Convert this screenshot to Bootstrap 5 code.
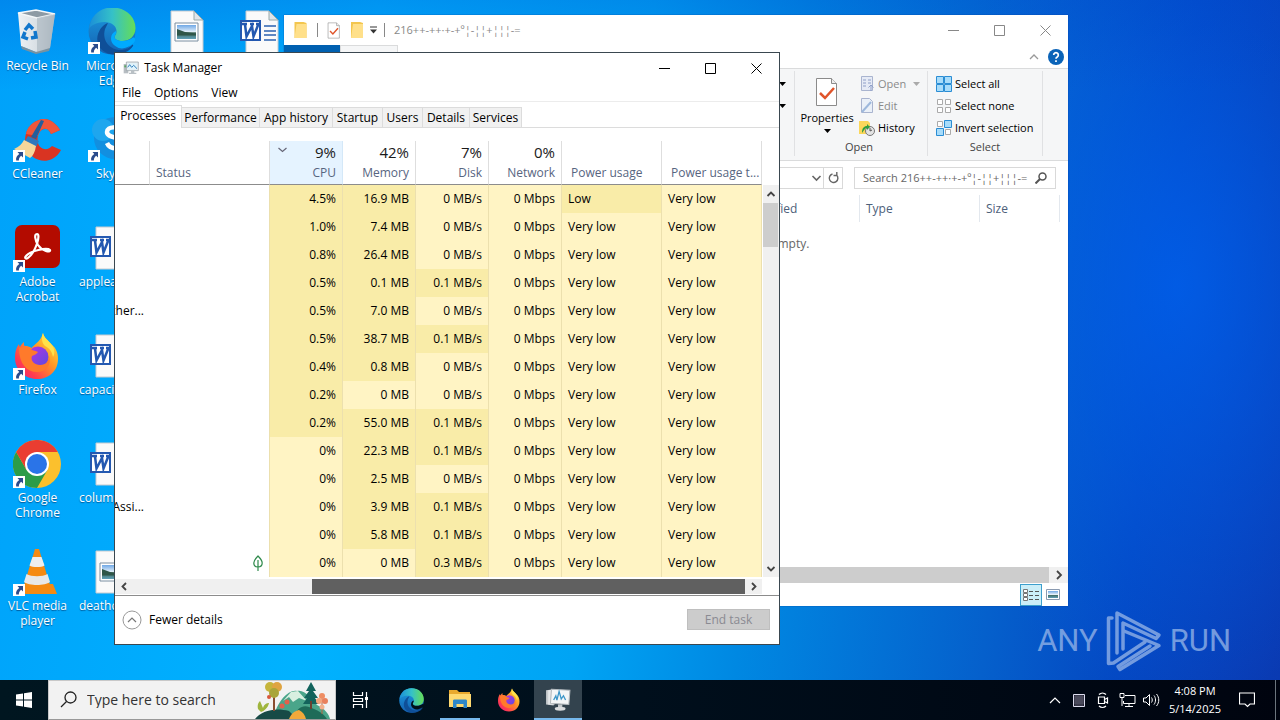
<!DOCTYPE html>
<html lang="en">
<head>
<meta charset="utf-8">
<meta name="viewport" content="width=device-width, initial-scale=1">
<title>Desktop</title>
<link href="https://cdn.jsdelivr.net/npm/bootstrap@5.3.0/dist/css/bootstrap.min.css" rel="stylesheet">
<style>
  body { font-family: "Open Sans", "Noto Sans", sans-serif; font-size: 12px; line-height: 16px; color: #000; }
  button, input { font: inherit; color: inherit; }
  button { background: none; border: 0; padding: 0; }
  a { color: inherit; text-decoration: none; }
  svg { display: block; flex: none; }
  .screen { background:
      linear-gradient(180deg, rgba(0,70,205,.28) 0, rgba(0,70,205,0) 90px),
      radial-gradient(ellipse 260px 420px at 92% 42%, rgba(0,98,240,.75), rgba(0,98,240,0)),
      linear-gradient(97deg, #00a2fa 0%, #00b2ff 28%, #00a4f4 48%, #0088e2 60%, #0560cc 78%, #0448c2 88%, #0a3ab2 100%); }

  /* desktop shortcuts */
  .shortcuts { display: grid; grid-auto-flow: column; grid-template-rows: repeat(6, 108px); grid-auto-columns: 75px; padding-top: 8px; width: max-content; position: relative; }
  .shortcut { color: #fff; text-align: center; line-height: 15px; overflow: hidden; text-shadow: 0 1px 1px rgba(0,40,90,.6); }
  .shortcut svg { margin: 0 auto 2px 13px; }
  .clipped { text-align: left; padding-left: 4px; white-space: nowrap; }
  .clipped svg { margin-left: 6px; }
  .topdoc svg { margin-left: 10px; }

  /* windows */
  .win { position: absolute; background: #fff; }
  .explorer { left: 284px; top: 15px; width: 784px; height: 591px; box-shadow: 0 0 1px #0a3a90; font-size: 11px; }
  .taskmgr { left: 114px; top: 52px; width: 666px; height: 593px; border: 1px solid #3a4750; }
  .capbtn { width: 46px; height: 30px; display: grid; place-items: center; }

  .ex-title { height: 30px; color: #888; }
  .ex-tabs { height: 23px; }
  .file-tab { width: 56px; background: #0060b0; color: #fff; }
  .ctx-tab { width: 58px; background: #f5f6f7; border: 1px solid #dadbdc; border-bottom: 0; }
  .ribbon { height: 93px; background: #f5f6f7; border-top: 1px solid #dadbdc; border-bottom: 1px solid #dadbdc; padding-right: 25px; }
  .rgroup { border-right: 1px solid #e0e1e3; margin: 2px 0 4px; padding-top: 2px; position: relative; }
  .rgroup button { display: flex; align-items: center; height: 22px; gap: 3px; white-space: nowrap; }
  .rgroup .props { flex-direction: column; height: auto; gap: 3px; width: 56px; }
  .rlabel { text-align: center; color: #444; }
  .off { color: #8a8a8a; }
  .field { border: 1px solid #d9d9d9; height: 22px; }
  .field input { border: 0; outline: 0; width: 100%; min-width: 0; padding: 0 0 0 8px; background: none; }
  .field input::placeholder { color: #666; opacity: 1; }
  .ex-head { height: 27px; color: #4c607a; font-size: 12px; line-height: 28px; }
  .ex-head span { border-right: 1px solid #e3e8ee; padding-left: 6px; }
  .ex-empty { color: #666; font-size: 12px; padding: 14px 0 0 154px; }
  .ex-scroll { height: 16px; background: #f0f0f0; }
  .ex-scroll span { background: #cdcdcd; }
  .ex-foot { height: 23px; }
  .view-on { width: 22px; height: 22px; background: #cbeef8; border: 1px solid #3c9fcd; display: grid; place-items: center; }

  .tm-title { height: 30px; padding-left: 8px; }
  .tm-menu { height: 19px; border-bottom: 1px solid #ececec; padding: 2px 0 0 7px; gap: 13px; }
  .tm-tabs { height: 26px; padding-top: 3px; border-bottom: 1px solid #dcdcdc; align-items: flex-end; }
  .tm-tabs button { height: 20px; line-height: 19px; background: #f1f1f1; border: 1px solid #dcdcdc; border-width: 1px 1px 0 0; text-align: center; }
  .tm-tabs .on { height: 23px; line-height: 20px; background: #fff; margin-bottom: -1px; padding-bottom: 3px; }
  .procs { table-layout: fixed; width: 647px; border-collapse: separate; border-spacing: 0; }
  .procs th { height: 44px; vertical-align: bottom; font-weight: 400; color: #57657f; padding: 0 6px 3px; line-height: 16px; border-right: 1px solid #dedede; border-bottom: 1px solid #8c8c8c; white-space: nowrap; overflow: hidden; }
  .procs th b { display: block; font-weight: 400; font-size: 15px; line-height: 20px; color: #1a1a1a; margin-bottom: 3px; }
  .procs th.pw { padding-left: 9px; }
  .procs th.sorted { background: #e5f3ff; position: relative; border-right-color: #d4e8f8; }
  .procs th.sorted svg { position: absolute; left: 8px; top: 6px; }
  .procs td { height: 28px; padding: 0 6px; white-space: nowrap; overflow: hidden; }
  .procs td.n { text-align: right; }
  .procs td.n, .procs td.p { background: #fff4c4; border-right: 1px solid #ece0ae; }
  .procs td.hot { background: #f9eca8; }
  .procs td.st { border-right: 1px solid #ece0ae; }
  .nm { display: flex; justify-content: flex-end; overflow: hidden; }
  .procs td.nmc { padding: 0 6px 0 0; }
  .vbar { width: 16px; margin-top: 44px; background: #f0f0f0; }
  .vbar .thumb { height: 44px; background: #cdcdcd; margin: 0 1px 0 0; }
  .hbar { height: 15px; width: 647px; background: #f0f0f0; margin: 2px 0 1px; }
  .hbar .thumb { background: #606060; }
  .tm-foot { border-top: 1px solid #8c8c8c; padding: 0 9px 1px 7px; }
  .endtask { width: 83px; height: 21px; background: #ccc; border: 1px solid #bfbfbf; color: #8a8a92; line-height: 19px; }

  /* watermark */
  .mark-run { position: absolute; right: 49px; bottom: 8px; color: #8fb0e6; font-family: "Roboto", sans-serif; font-size: 31px; line-height: 62px; opacity: .8; }

  /* taskbar */
  .taskbar { height: 40px; background: linear-gradient(90deg, #001620, #000f1c 50%, #00040f); color: #fff; position: relative; }
  .tb { height: 40px; display: grid; place-items: center; }
  .w48 { width: 48px; } .w24 { width: 24px; }
  .apps { gap: 1px; }
  .running { border-bottom: 2px solid #76b9ed; width: 40px; margin: 0 4px; }
  .active-app { background: #33434e; border-bottom: 2px solid #76b9ed; }
  .search { width: 288px; background: #f2f2f2; border: 1px solid #c8c8c8; border-bottom-color: #999; color: #333; }
  .search input { border: 0; outline: 0; background: none; width: 168px; font-size: 14px; padding: 0; }
  .search input::placeholder { color: #333; opacity: 1; }
  .clock { width: 64px; text-align: center; font-size: 11px; line-height: 18px; padding-top: 2px; }
</style>
</head>
<body>
<svg width="0" height="0" class="position-absolute" aria-hidden="true">
  <defs>
    <linearGradient id="eg1" x1="0" y1="0" x2="1" y2="0"><stop offset="0" stop-color="#1b8fd8"/><stop offset=".5" stop-color="#35c1c8"/><stop offset="1" stop-color="#66dd55"/></linearGradient>
    <linearGradient id="eg2" x1="0" y1="0" x2="0" y2="1"><stop offset="0" stop-color="#1b9de2"/><stop offset="1" stop-color="#1560b0"/></linearGradient>
    <linearGradient id="ff1" x1="1" y1="0" x2="0" y2="1"><stop offset="0" stop-color="#fff04a"/><stop offset=".4" stop-color="#ff9a24"/><stop offset=".75" stop-color="#ff3b50"/><stop offset="1" stop-color="#e0208a"/></linearGradient>
    <linearGradient id="ff2" x1="0" y1="0" x2="1" y2="1"><stop offset="0" stop-color="#b833e1"/><stop offset="1" stop-color="#5a4be0"/></linearGradient>
    <linearGradient id="sky" x1="0" y1="0" x2="0" y2="1"><stop offset="0" stop-color="#6fa8e6"/><stop offset=".5" stop-color="#e6f1fa"/><stop offset=".55" stop-color="#3e6658"/><stop offset="1" stop-color="#5fa0b8"/></linearGradient>
    <linearGradient id="bin" x1="0" y1="0" x2="1" y2="0"><stop offset="0" stop-color="#eef2f5"/><stop offset=".6" stop-color="#d5dce2"/><stop offset="1" stop-color="#a9b5be"/></linearGradient>
    <symbol id="arrow" viewBox="0 0 12 12"><path d="M0 0h12v12H0z" fill="#fff"/><path d="M4.500 2H10v5.500L8.200 5.800C6.500 7.300 5.800 8.500 5.900 10.500H3.200C2.600 7.600 4 5.400 6.300 3.900z" fill="#2b4b8c"/></symbol>
    <symbol id="edge" viewBox="0 0 48 48">
      <circle cx="24" cy="24" r="23.500" fill="url(#eg2)"/>
      <path d="M1 22C3 8 13 .5 24 .5 38 .5 47.500 10 47.500 21c0 9-7 13-13 13-5 0-8-2-8-4 0-1.500 2-2 2-6 0-5-5-9-12-9C8 15 2 19 1 22z" fill="url(#eg1)"/>
      <path d="M17 22c-4 14 8 22 17 21 5-.6 8-3 10-5 .8-.8 1.500 0 1 1-4 6-12 9-20 8.500C13 46.500 8 37 9.500 29 11 22 16 17 20 16z" fill="#0f4f98"/>
      <path d="M26.500 30c0 2 3 4 8 4 4 0 8-1.500 10.500-3.500 2 0 3 2 1 5-7 7-14 7-18 4-5-3-6-8-4-12 1-2 3-3 4-3.500 1 3-1.500 4-1.500 6z" fill="#00aafe"/>
    </symbol>
    <symbol id="edge-bar" viewBox="0 0 48 48">
      <circle cx="24" cy="24" r="23.500" fill="url(#eg2)"/>
      <path d="M1 22C3 8 13 .5 24 .5 38 .5 47.500 10 47.500 21c0 9-7 13-13 13-5 0-8-2-8-4 0-1.500 2-2 2-6 0-5-5-9-12-9C8 15 2 19 1 22z" fill="url(#eg1)"/>
      <path d="M17 22c-4 14 8 22 17 21 5-.6 8-3 10-5 .8-.8 1.500 0 1 1-4 6-12 9-20 8.500C13 46.500 8 37 9.500 29 11 22 16 17 20 16z" fill="#0f4f98"/>
      <path d="M26.500 30c0 2 3 4 8 4 4 0 8-1.500 10.500-3.500 2 0 3 2 1 5-7 7-14 7-18 4-5-3-6-8-4-12 1-2 3-3 4-3.500 1 3-1.500 4-1.500 6z" fill="#001019"/>
    </symbol>
    <symbol id="firefox" viewBox="0 0 48 48">
      <path d="M30 1c1 5 5 7 9 12 4 3 6 8 6 14 0 12-9 20-21 20S2 38 2 26c0-6 1-10 4-14 .2 1.500.5 2 1 3 1-2 2.500-4 4-5-.3 2 0 3 .5 4 3 0 5 .5 7 2C22 12 28 9 30 1z" fill="url(#ff1)"/>
      <circle cx="25" cy="25" r="10.500" fill="url(#ff2)"/>
      <path d="M6 16c5-2 10-2 13 2 2 1 5 1 6 2-1 2-4 3-6 4-2 5 3 9 8 9 6 0 9-4 9-9 3 9-3 16-12 16-10 0-18-8-18-24z" fill="#ff7a2b"/>
      <path d="M30 1c1 5 5 7 9 12 3 4 3 9 1 12-1-6-4-9-8-11-3-3-4-8-2-13z" fill="#ffe14a"/>
    </symbol>
    <symbol id="page" viewBox="0 0 34 44"><path d="M1 1h23l9 9v33H1z" fill="#fafafa" stroke="#c4cad0"/><path d="M24 1v9h9z" fill="#dfe5ea" stroke="#9aa"/></symbol>
    <symbol id="imgfile" viewBox="0 0 48 48"><use href="#page" x="10" y="2" width="34" height="44"/><path d="M15 15h23v18H15z" fill="#fff" stroke="#7a8ea0"/><path d="M17 17h19v14H17z" fill="url(#sky)"/><path d="M17 21l8 3 11 1.500v2H17z" fill="#2f5648"/></symbol>
    <symbol id="wordfile" viewBox="0 0 48 48"><use href="#page" x="10" y="2" width="34" height="44"/><path d="M29 18h12M29 23h12M29 27h12M29 32h12" stroke="#2b62b0" stroke-width="1.500"/><path d="M5 12h21v21H5z" fill="#2358b0"/><path d="M7 14h17v17H7z" fill="#fff"/><path d="M7 16h5M15 16h4M21 16h4M10 16.500l1.500 12L17 18l1.500 10.500L23.500 16" stroke="#2358b0" stroke-width="2.500" fill="none"/></symbol>
    <symbol id="tmicon" viewBox="0 0 24 24"><path d="M1 6h7v14H1z" fill="#b7bdc2"/><path d="M2 8h4v3H2z" fill="#55a860"/><path d="M5 3h18v13H5z" fill="#e8edf0" stroke="#8d979e"/><path d="M7 5h14v9H7z" fill="#dff3fb"/><path d="M7 11l3-4 3 4 3-3 5 5" stroke="#2b7ab8" stroke-width="1.400" fill="none"/><path d="M12 16h5v3h3v2H9v-2h3z" fill="#b9c0c5"/></symbol>
    <symbol id="tmbar" viewBox="0 0 24 24"><path d="M1 4l7-1v15l-7-1z" fill="#c9cdd0"/><path d="M3 4l6-1v14H3z" fill="#e6e8ea"/><path d="M6 3l17 1-1 13-17-1z" fill="#f4f6f7" stroke="#b4babe"/><path d="M8 13l2-4 1 4 2-8 2 7 2-3 2 4" stroke="#3b95c8" stroke-width="1.200" fill="none"/><path d="M12 17h4v3h-4z" fill="#c4c9cc"/><ellipse cx="14" cy="21" rx="5" ry="1.800" fill="#d9dcde"/></symbol>
    <symbol id="folder" viewBox="0 0 16 18"><path d="M2 1h9l3 1v15H2z" fill="#f3c64e"/><path d="M4 3h10v14H2z" fill="#ffe08a"/></symbol>
    <symbol id="check" viewBox="0 0 24 30"><path d="M1.500 1.500h15l5 5v22h-20z" fill="#fff" stroke="#8b8b8b"/><path d="M16.500 1.500v5h5" fill="#eee" stroke="#8b8b8b"/><path d="M5 16l5 5 9-10" stroke="#e0542a" stroke-width="2.500" fill="none"/></symbol>
  </defs>
</svg>

<div class="vh-100 d-flex flex-column overflow-hidden">
<main class="screen flex-grow-1 position-relative overflow-hidden">
  <nav class="shortcuts" aria-label="Desktop">
    <a class="shortcut" href="#"><svg width="48" height="48" viewBox="0 0 48 48"><path d="M5 5l18-3 19 4-5 34-14 4-15-6z" fill="url(#bin)"/><path d="M5 5l18-3 19 4-18 4z" fill="#8d9aa4" stroke="#f4f7f9" stroke-width="1.500"/><path d="M24 10l18-4-5 34-13 4z" fill="#aeb9c2" opacity=".7"/><path d="M8 38l15 6 14-4-1 3-13 3-14-5z" fill="#c98d68" opacity=".6"/><g fill="none" stroke="#1277cc" stroke-width="3.500"><path d="M12 22l4-5 4 4"/><path d="M22 23l1 6-5 1"/><path d="M15 31l-5-2 2-5"/></g></svg>Recycle Bin</a>
    <a class="shortcut" href="#"><svg width="48" height="48" viewBox="0 0 48 48"><path d="M47 14C42 6 34 1 26 4 14 8 10 20 13 32c4 10 16 16 26 11 4-2 7-5 9-9l-9-4c-4 5-12 4-14-3-2-9 3-15 8-14 2 0 4 2 5 5z" fill="#d93422"/><path d="M47 14C42 6 34 1 26 4c-8 3-12 8-13 14l12 2c2-6 5-8 8-7 2 0 4 2 5 5z" fill="#f0563a"/><path d="M28 4l3 1-8 18-5-2z" fill="#245e9c"/><path d="M15 20l11 5-3 6-11-6z" fill="#2f78bd"/><path d="M11 24l12 6c-1 6-3 10-6 12L1 33c5-2 8-5 10-9z" fill="#f6d79a"/><use href="#arrow" y="34" width="12" height="12"/></svg>CCleaner</a>
    <a class="shortcut" href="#"><svg width="48" height="48" viewBox="0 0 48 48"><rect x="2" y="1" width="45" height="43" rx="7" fill="#b30b00"/><path d="M13 32c4-5 21-9 24-6 1 3-8 1-12-5-3-5-4-11-1-11 4 0-1 17-8 23-3 3-5 1-3-1z" fill="none" stroke="#fff" stroke-width="2.200"/><use href="#arrow" y="36" width="12" height="12"/></svg>Adobe<br>Acrobat</a>
    <a class="shortcut" href="#"><svg width="48" height="48" viewBox="0 0 48 48"><use href="#firefox" width="48" height="48"/><use href="#arrow" y="36" width="12" height="12"/></svg>Firefox</a>
    <a class="shortcut" href="#"><svg width="48" height="48" viewBox="0 0 48 48"><circle cx="24" cy="24" r="24" fill="#fbc02d"/><path d="M3.200 12A24 24 0 0 0 24 48l10.400-18-10.400 6-10.400-6z" fill="#2c9c48"/><path d="M3.200 12A24 24 0 0 1 44.800 12H24L13.600 30z" fill="#ea3d31"/><circle cx="24" cy="24" r="12" fill="#fff"/><circle cx="24" cy="24" r="10" fill="#2a74e8"/><use href="#arrow" y="36" width="12" height="12"/></svg>Google<br>Chrome</a>
    <a class="shortcut" href="#"><svg width="48" height="48" viewBox="0 0 48 48"><path d="M10 36h30l4 10H6z" fill="#f58a12"/><path d="M22 1h4l11 36c-6 5-20 5-26 0z" fill="#f58a12"/><path d="M19.500 9h9l3 8.500c-3 2-12 2-15 0z" fill="#eee"/><path d="M13.500 26c5 3 16 3 21 0l2.500 8c-5 4-21 4-26 0z" fill="#e8e8e8"/><use href="#arrow" y="36" width="12" height="12"/></svg>VLC media<br>player</a>

    <a class="shortcut" href="#"><svg width="48" height="48" viewBox="0 0 48 48"><use href="#edge" y="-1" width="48" height="48"/><use href="#arrow" y="34" width="12" height="12"/></svg>Microsoft<br>Edge</a>
    <a class="shortcut" href="#"><svg width="48" height="48" viewBox="0 0 48 48"><circle cx="27" cy="22" r="21" fill="#128fe0"/><circle cx="15" cy="14" r="11" fill="#1ea6ee"/><path d="M34 15c-3-5-15-5-15 1 0 7 16 4 16 11 0 7-13 7-16 0" fill="none" stroke="#fff" stroke-width="4.500"/><use href="#arrow" y="34" width="12" height="12"/></svg>Skype</a>
    <a class="shortcut clipped" href="#"><svg width="48" height="48"><use href="#wordfile"/></svg>applea</a>
    <a class="shortcut clipped" href="#"><svg width="48" height="48"><use href="#wordfile"/></svg>capacit</a>
    <a class="shortcut clipped" href="#"><svg width="48" height="48"><use href="#wordfile"/></svg>columl</a>
    <a class="shortcut clipped" href="#"><svg width="48" height="48"><use href="#imgfile"/></svg>deathc</a>
    <a class="shortcut topdoc" href="#" aria-label="Picture" style="grid-column:3;grid-row:1"><svg width="48" height="48"><use href="#imgfile"/></svg></a>
    <a class="shortcut topdoc" href="#" aria-label="Document" style="grid-column:4;grid-row:1"><svg width="48" height="48"><use href="#wordfile"/></svg></a>
  </nav>

  <div class="mark-run d-flex align-items-center"><span>ANY</span>
    <svg width="56" height="62" viewBox="0 0 56 62" class="mx-2" fill="none" stroke="#8fb0e6" stroke-width="3.500" stroke-linejoin="round" stroke-linecap="round"><path d="M11 43V3l42 22-3 3.500L17 13v26"/><path d="M6 8H2.500v45.500l5-.5L39 32"/><path d="M18 21l35 14.500L14 59.500l-2-3L44 36"/></svg>
    <span>RUN</span></div>

  <section class="win explorer d-flex flex-column overflow-hidden" aria-label="File Explorer">
    <div class="ex-title d-flex align-items-center">
      <svg class="ms-2" width="17" height="18"><use href="#folder"/></svg>
      <svg class="ms-2" width="2" height="14"><path d="M.5 0v14" stroke="#888"/></svg>
      <svg class="ms-2" width="14" height="17"><use href="#check"/></svg>
      <svg class="ms-2" width="16" height="18"><use href="#folder"/></svg>
      <svg class="ms-1" width="9" height="8"><path d="M1 1h7" stroke="#333"/><path d="M1 3.500h7l-3.500 4z" fill="#333"/></svg>
      <svg width="8" height="14"><path d="M6.500 0v14" stroke="#888"/></svg>
      <span class="ms-2 flex-grow-1">216++-++·+-+º¦-¦¦+¦¦¦-=</span>
      <button class="capbtn" aria-label="Minimize"><svg width="11" height="11"><path d="M0 5.500h11" stroke="#888"/></svg></button>
      <button class="capbtn" aria-label="Maximize"><svg width="11" height="11"><path d="M.5.5h10v10H.5z" fill="none" stroke="#888"/></svg></button>
      <button class="capbtn" aria-label="Close"><svg width="11" height="11"><path d="M.5.5l10 10M10.500.5l-10 10" stroke="#888"/></svg></button>
    </div>
    <div class="ex-tabs d-flex">
      <div class="file-tab"></div><div class="ctx-tab"></div>
      <div class="ms-auto d-flex align-items-center gap-2 pe-1">
        <svg width="12" height="8"><path d="M2 6l4-4 4 4" fill="none" stroke="#999" stroke-width="1.300"/></svg>
        <button aria-label="Help" class="rounded-circle d-grid" style="place-items:center"><svg width="16" height="16" viewBox="0 0 16 16"><circle cx="8" cy="8" r="8" fill="#0a63b8"/><path d="M5.700 6a2.300 2.300 0 1 1 3.500 2c-.9.500-1.200.9-1.200 1.800M8 11.300v1.700" stroke="#fff" stroke-width="1.700" fill="none"/></svg></button>
      </div>
    </div>
    <div class="ribbon d-flex justify-content-end">
      <div class="rgroup d-flex flex-column pe-2"><button class="ps-1" aria-label="More"><svg width="7" height="4"><path d="M0 0h7L3.500 4z"/></svg></button><button class="ps-1" aria-label="More"><svg width="7" height="4"><path d="M0 0h7L3.500 4z"/></svg></button></div>
      <div class="rgroup d-flex flex-column ps-1" style="width:133px">
        <div class="d-flex">
          <button class="props pt-1"><svg width="24" height="30"><use href="#check"/></svg>Properties<svg width="7" height="4"><path d="M0 0h7L3.500 4z"/></svg></button>
          <div class="ps-1">
            <button class="off" disabled><svg width="16" height="16"><path d="M2.500.5h11v14h-11z" fill="#e6ebf6" stroke="#a9b4cf"/><path d="M4 4h3M4 7h3M4 10h3M9 4h3M9 7h3" stroke="#8f9fc8"/><path d="M12 15V9M9.500 11.500L12 9l2.500 2.500" stroke="#8f9fc8" fill="none"/></svg>Open<svg class="ms-1" width="7" height="4"><path d="M0 0h7L3.500 4z" fill="#aaa"/></svg></button>
            <button class="off" disabled><svg width="16" height="16"><path d="M2.500.5h8l3 3v11h-11z" fill="#eaf0f8" stroke="#a9b4cf"/><path d="M3 14L12 4" stroke="#9db8dc" stroke-width="2"/></svg>Edit</button>
            <button><svg width="16" height="16"><path d="M0 1h9l2 2v11H0z" fill="#fbd75b"/><circle cx="11" cy="11" r="4.500" fill="#e3e3e3" stroke="#777"/><path d="M11 8v3l2-1" stroke="#555" fill="none"/><path d="M3 13c0-5 2-7 5-7V4l3 3-3 3V8c-2 0-3 2-5 5z" fill="#2f9e3f"/></svg>History</button>
          </div>
        </div>
        <div class="rlabel pe-2">Open</div>
      </div>
      <div class="rgroup ps-2" style="width:115px">
        <button><svg width="16" height="16"><path d="M.5.5h7v7h-7zM8.500.5h7v7h-7zM.5 8.500h7v7h-7zM8.500 8.500h7v7h-7z" fill="#a8dcfa" stroke="#2a8dd4"/></svg>Select all</button>
        <button><svg width="16" height="16"><path d="M1.500 1.500h5v5h-5zM9.500 1.500h5v5h-5zM1.500 9.500h5v5h-5zM9.500 9.500h5v5h-5z" fill="#fff" stroke="#aaa"/></svg>Select none</button>
        <button><svg width="16" height="16"><path d="M1.500 1.500h5v5h-5zM9.500 9.500h5v5h-5z" fill="#fff" stroke="#aaa"/><path d="M8.500.5h7v7h-7zM.5 8.500h7v7h-7z" fill="#a8dcfa" stroke="#2a8dd4"/></svg>Invert selection</button>
        <div class="rlabel pe-2">Select</div>
      </div>
    </div>
    <div class="d-flex align-items-center" style="height:34px;padding-right:12px">
      <div class="field d-flex align-items-center justify-content-end flex-grow-1 ms-5 border-end-0">
        <svg width="12" height="8"><path d="M1.500 2l4 4 4-4" fill="none" stroke="#666" stroke-width="1.600"/></svg>
      </div>
      <button class="field d-grid" style="place-items:center;width:20px" aria-label="Refresh"><svg width="11" height="12" viewBox="0 0 11 12"><path d="M8.500 3A4.300 4.300 0 1 1 4.500 2M8.800 0v3.500H5.500" fill="none" stroke="#666" stroke-width="1.400"/></svg></button>
      <div class="field d-flex align-items-center pe-2" style="width:202px;margin-left:11px">
        <input type="text" aria-label="Search folder" placeholder="Search 216++-++·+-+º¦-¦¦+¦¦¦-=">
        <svg width="12" height="12"><circle cx="7.500" cy="4.500" r="3.500" fill="none" stroke="#555" stroke-width="1.500"/><path d="M5 7l-4.500 4.500" stroke="#555" stroke-width="2"/></svg>
      </div>
    </div>
    <div class="ex-head d-flex justify-content-end pe-2"><span style="width:148px">Date modified</span><span style="width:120px">Type</span><span style="width:80px">Size</span></div>
    <div class="ex-empty flex-grow-1 text-center">This folder is empty.</div>
    <div class="ex-scroll d-flex align-items-stretch"><span class="flex-grow-1"></span><svg width="19" height="16"><path d="M8 4l4 4-4 4" fill="none" stroke="#444" stroke-width="1.800"/></svg></div>
    <div class="ex-foot d-flex justify-content-end align-items-center pe-2 gap-1">
      <button class="view-on" aria-label="Details view"><svg width="17" height="14"><path d="M.5 1.500h4v3h-4zM.5 5.500h4v3h-4zM.5 9.500h4v3h-4z" fill="#fff" stroke="#777"/><path d="M6 3.500h4M12 3.500h4M6 7.500h4M12 7.500h4M6 11.500h4M12 11.500h4" stroke="#555"/></svg></button>
      <button aria-label="Large icons"><svg width="14" height="12"><path d="M.5.5h13v10H.5z" fill="#fff" stroke="#8a9ab0"/><path d="M2 2h10v7H2z" fill="url(#sky)"/></svg></button>
    </div>
  </section>

  <section class="win taskmgr d-flex flex-column" aria-label="Task Manager">
    <div class="tm-title d-flex align-items-center">
      <svg width="16" height="16"><use href="#tmicon"/></svg><span class="ms-1 flex-grow-1">&hairsp;Task Manager</span>
      <button class="capbtn" aria-label="Minimize"><svg width="11" height="11"><path d="M0 5.500h11" stroke="#000"/></svg></button>
      <button class="capbtn" aria-label="Maximize"><svg width="11" height="11"><path d="M.5.5h10v10H.5z" fill="none" stroke="#000"/></svg></button>
      <button class="capbtn" aria-label="Close"><svg width="11" height="11"><path d="M.5.5l10 10M10.500.5l-10 10" stroke="#000"/></svg></button>
    </div>
    <div class="tm-menu d-flex align-items-center"><button>File</button><button>Options</button><button>View</button></div>
    <div class="tm-tabs d-flex" role="tablist">
      <button role="tab" class="on" style="width:67px">Processes</button><button role="tab" style="width:78px">Performance</button><button role="tab" style="width:73px">App history</button><button role="tab" style="width:50px">Startup</button><button role="tab" style="width:40px">Users</button><button role="tab" style="width:47px">Details</button><button role="tab" style="width:52px">Services</button>
    </div>
    <div class="d-flex" style="padding-top:13px">
      <table class="procs">
        <colgroup><col style="width:35px"><col style="width:120px"><col style="width:73px"><col style="width:73px"><col style="width:73px"><col style="width:73px"><col style="width:100px"><col style="width:100px"></colgroup>
        <thead><tr><th></th><th>Status</th>
          <th class="sorted text-end"><svg width="9" height="6"><path d="M.5 1l4 3.500 4-3.500" fill="none" stroke="#667" stroke-width="1.200"/></svg><b>9%</b>CPU</th>
          <th class="text-end"><b>42%</b>Memory</th><th class="text-end"><b>7%</b>Disk</th><th class="text-end"><b>0%</b>Network</th><th class="pw">Power usage</th><th class="pw">Power usage t...</th></tr></thead>
        <tbody id="rows"></tbody>
      </table>
      <div class="vbar d-flex flex-column ms-auto">
        <svg width="16" height="18"><path d="M4.500 11L8 7.500 11.500 11" fill="none" stroke="#444" stroke-width="1.800"/></svg>
        <div class="thumb"></div>
        <svg class="mt-auto" width="16" height="18"><path d="M4.500 8L8 11.500 11.500 8" fill="none" stroke="#444" stroke-width="1.800"/></svg>
      </div>
    </div>
    <div class="hbar d-flex">
      <svg width="17" height="15"><path d="M11 4L7.500 7.500 11 11" fill="none" stroke="#444" stroke-width="1.800"/></svg>
      <div class="thumb" style="margin-left:180px;width:433px"></div>
      <svg width="17" height="15"><path d="M7 4l3.500 3.500L7 11" fill="none" stroke="#444" stroke-width="1.800"/></svg>
    </div>
    <div class="tm-foot d-flex align-items-center justify-content-between flex-grow-1">
      <button class="d-flex align-items-center"><svg width="20" height="20"><circle cx="10" cy="10" r="9" fill="none" stroke="#999"/><path d="M6 12l4-4 4 4" fill="none" stroke="#777" stroke-width="1.200"/></svg><span style="margin-left:7px">Fewer details</span></button>
      <button class="endtask" disabled>End task</button>
    </div>
  </section>
</main>

<footer class="taskbar d-flex">
  <button class="tb w48" aria-label="Start"><svg width="16" height="16"><path d="M0 2.500L7 1.400V7.500H0zM8 1.200L16 0v7.500H8zM0 8.500h7v6.100L0 13.500zM8 8.500h8V16L8 14.800z" fill="#fff"/></svg></button>
  <div class="search d-flex align-items-center overflow-hidden">
    <svg class="ms-2" width="30" height="20"><circle cx="13.500" cy="7.500" r="5.500" fill="none" stroke="#222" stroke-width="1.300"/><path d="M9.500 11.500L4 17" stroke="#222" stroke-width="1.300"/></svg>
    <input type="text" aria-label="Search" placeholder="Type here to search">
    <svg width="80" height="38" viewBox="0 0 80 38">
      <path d="M18 38C22 20 34 8 42 10c8-2 14 8 20 14 8 4 12 9 13 14z" fill="#4aa58a"/><path d="M28 20l8-9 7-1 9 10-8-3-6 4-4-5z" fill="#d8efe0"/>
      <path d="M0 38c6-8 20-12 34-8l8 8z" fill="#174a46"/><path d="M38 38c4-12 10-14 16-12 9 3 15 7 18 12z" fill="#1e6b58"/><path d="M34 38c2-5 5-8 10-9 4 2 6 5 7 9z" fill="#f2a93a"/>
      <path d="M19 12v18" stroke="#8a4d32" stroke-width="2"/><circle cx="15" cy="6" r="5" fill="#c6b53c"/><circle cx="22" cy="6" r="5" fill="#dfa441"/><circle cx="19" cy="12" r="5" fill="#a9a53a"/><circle cx="14" cy="16" r="2" fill="#d9573c"/>
      <path d="M56 1l-5 9h3l-5 7h3l-4 6h16l-4-6h3l-5-7h3z" fill="#13635c"/><path d="M56 20v8" stroke="#6a4030" stroke-width="2"/>
      <path d="M67 18v15" stroke="#b5613c"/><circle cx="67" cy="15" r="3" fill="#ee8d63"/><circle cx="64" cy="20" r="3" fill="#f5a57c"/><circle cx="70" cy="20" r="3" fill="#e9805c"/><circle cx="67" cy="26" r="2.500" fill="#f2b08c"/>
      <path d="M3 28c-1-5 1-7 2-8l3 7c1-4 4-5 6-5-1 5-5 8-8 9z" fill="#9fb53e"/><circle cx="32" cy="21" r="2.500" fill="#e2604a"/><circle cx="27" cy="25" r="2.500" fill="#e2604a"/>
    </svg>
  </div>
  <div class="apps d-flex">
    <button class="tb w48" aria-label="Task View"><svg width="18" height="18"><path d="M2.500 1v3.500h9V1M2.500 17v-3.500h9V17M2.500 7.500h9v3h-9zM15.500 1v16" fill="none" stroke="#fff" stroke-width="1.200"/><path d="M14 6h3v3h-3z" fill="#fff"/></svg></button>
    <button class="tb w48" style="margin-left:2px" aria-label="Edge"><svg width="25" height="25"><use href="#edge-bar"/></svg></button>
    <button class="tb running" aria-label="File Explorer"><svg width="22" height="20"><path d="M0 1h8l2 2h11v15H0z" fill="#e9a92e"/><path d="M0 5h22v13H0z" fill="#ffd970"/><path d="M4 19v-7c0-1 .5-1.500 1.500-1.500h11c1 0 1.500.5 1.500 1.500v7h-3.500v-4h-7v4z" fill="#2f88c8"/></svg></button>
    <button class="tb w48" aria-label="Firefox"><svg width="24" height="24"><use href="#firefox"/></svg></button>
    <button class="tb w48 active-app" aria-label="Task Manager"><svg width="26" height="26"><use href="#tmbar"/></svg></button>
  </div>
  <div class="ms-auto d-flex">
    <button class="tb w24" aria-label="Hidden icons"><svg width="12" height="8"><path d="M1 7l5-5 5 5" fill="none" stroke="#fff" stroke-width="1.200"/></svg></button>
    <button class="tb w24" aria-label="Tray app"><svg width="12" height="13"><path d="M.5.5h11v12H.5z" fill="#223" stroke="#dde"/><path d="M3 1v11M5 1v11M7 1v11M9 1v11M1 3h10M1 5h10M1 7h10M1 9h10" stroke="#778" stroke-width=".6"/></svg></button>
    <button class="tb w24" aria-label="Meet now"><svg width="14" height="16"><path d="M2.500 5h6v6.500h-6zM8.500 7.500L11.500 6v5l-3-1.500M3 2.500C5 .5 8 .5 10 2.500M3 14c2 1.800 5 1.800 7 0" fill="none" stroke="#fff" stroke-width="1.200"/></svg></button>
    <button class="tb w24" aria-label="Network"><svg width="17" height="15"><path d="M6 2.500h10v8H4.500V8M10 10.500v3M6 13.500h8M1 .5h4v4H1zM3 5v8" fill="none" stroke="#fff"/></svg></button>
    <button class="tb w24" aria-label="Volume"><svg width="17" height="14"><path d="M.5 5h2.500L6.500 1.500v11L3 9H.5z" fill="none" stroke="#fff"/><path d="M8.500 4.500c1 1.500 1 3.500 0 5M11 2.500c2 2.500 2 6.500 0 9M13.500 1c3 3.500 3 8.500 0 12" fill="none" stroke="#fff"/></svg></button>
    <div class="clock"><div>4:08 PM</div><div>5/14/2025</div></div>
    <button class="tb" style="width:40px" aria-label="Notifications"><svg width="16" height="16"><path d="M.5 1h15v11H11l-2.500 2.500L6 12H.5z" fill="none" stroke="#fff" stroke-width="1.200"/></svg></button>
    <div class="border-start border-secondary" style="width:5px;margin-left:8px"></div>
  </div>
</footer>
</div>

<script src="https://cdn.jsdelivr.net/npm/bootstrap@5.3.0/dist/js/bootstrap.bundle.min.js"></script>
<script>
  // name fragment, cpu, memory, disk, power
  const procs = [
    ["", "4.5%", "16.9 MB", "0 MB/s", "Low"], ["", "1.0%", "7.4 MB", "0 MB/s", "Very low"],
    ["", "0.8%", "26.4 MB", "0 MB/s", "Very low"], ["", "0.5%", "0.1 MB", "0.1 MB/s", "Very low"],
    ["ther...", "0.5%", "7.0 MB", "0 MB/s", "Very low"], ["", "0.5%", "38.7 MB", "0.1 MB/s", "Very low"],
    ["", "0.4%", "0.8 MB", "0 MB/s", "Very low"], ["", "0.2%", "0 MB", "0 MB/s", "Very low"],
    ["", "0.2%", "55.0 MB", "0.1 MB/s", "Very low"], ["", "0%", "22.3 MB", "0.1 MB/s", "Very low"],
    ["", "0%", "2.5 MB", "0 MB/s", "Very low"], ["Assi...", "0%", "3.9 MB", "0.1 MB/s", "Very low"],
    ["", "0%", "5.8 MB", "0.1 MB/s", "Very low"], ["", "0%", "0 MB", "0.3 MB/s", "Very low"]
  ];
  const leaf = '<svg class="ms-auto" width="10" height="16"><path d="M5 1C2 4 .8 6 .8 8c0 2.500 2 4 4.200 4s4.200-1.500 4.200-4C9.200 6 8 4 5 1zM5 5v11" fill="none" stroke="#2f8a4c" stroke-width="1.200"/></svg>';
  const num = v => `<td class="n${parseFloat(v) ? " hot" : ""}">${v}</td>`;
  document.getElementById("rows").innerHTML = procs.map((r, i) =>
    `<tr><td class="nmc"><div class="nm">${r[0]}</div></td><td class="st">${i === 13 ? leaf : ""}</td>` +
    num(r[1]) + num(r[2]) + num(r[3]) + num("0 Mbps") +
    `<td class="p${r[4] === "Low" ? " hot" : ""}">${r[4]}</td><td class="p">Very low</td></tr>`).join("");
</script>
</body>
</html>
